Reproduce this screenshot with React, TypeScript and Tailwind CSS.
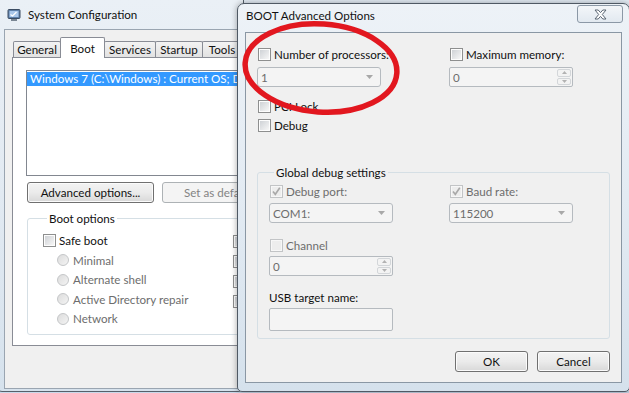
import type { ReactNode } from "react";

function Check({ checked = false, dim = false }: { checked?: boolean; dim?: boolean }) {
  return (
    <span
      className={
        dim
          ? "relative flex h-[13px] w-[13px] shrink-0 items-center justify-center border border-[#c2c4c6] bg-[#f7f7f7]"
          : "relative flex h-[13px] w-[13px] shrink-0 items-center justify-center border border-[#8e8f8f] bg-[#fdfdfd]"
      }
    >
      <span
        className={
          dim
            ? "h-[9px] w-[9px] bg-[#ededed]"
            : "h-[9px] w-[9px] bg-linear-to-br from-[#cfd2d6] to-[#f7f7f7]"
        }
      />
      {checked && (
        <svg className="absolute inset-0" width="11" height="11" viewBox="0 0 11 11">
          <path d="M2 5.5 L4.3 8.3 L8.8 1.8" fill="none" stroke="#a9a9a9" strokeWidth="1.6" />
        </svg>
      )}
    </span>
  );
}

function CheckRow({
  label,
  checked,
  dim,
  gray,
}: {
  label: string;
  checked?: boolean;
  dim?: boolean;
  gray?: boolean;
}) {
  return (
    <div className="ml-px flex h-[13px] items-center gap-[3px] whitespace-nowrap leading-[13px]">
      <Check checked={checked} dim={dim} />
      <span className={gray ? "text-[#6d6d6d]" : "text-[#111]"}>{label}</span>
    </div>
  );
}

function Radio({ label }: { label: string }) {
  return (
    <div className="flex h-[19.5px] items-center gap-[4px] whitespace-nowrap pl-[14px] text-[#6d6d6d]">
      <span className="h-[12px] w-[12px] shrink-0 rounded-full border border-[#c4c6c8] bg-linear-to-br from-[#dcdcdc] to-[#f4f4f4]" />
      {label}
    </div>
  );
}

function Combo({ value }: { value: string }) {
  return (
    <div className="flex h-[20px] w-[124px] items-center justify-between rounded-[3px] border border-[#b5babf] bg-[#f4f4f4] pl-[3px] pr-[7px] text-[#6d6d6d]">
      <span>{value}</span>
      <svg width="7" height="4" viewBox="0 0 7 4">
        <path d="M0 0h7L3.5 4z" fill="#a8a8a8" />
      </svg>
    </div>
  );
}

function Spin({ value }: { value: string }) {
  return (
    <div className="flex h-[20px] w-[124px] rounded-[2px] border border-[#b5babf] bg-[#f4f4f4] text-[#6d6d6d]">
      <span className="flex flex-1 items-center pl-[3px]">{value}</span>
      <div className="flex w-[16px] flex-col gap-px p-px">
        <span className="flex flex-1 items-center justify-center rounded-[2px] border border-[#d3d6d9] bg-[#f3f3f3]">
          <svg width="5" height="3" viewBox="0 0 5 3">
            <path d="M0 3h5L2.5 0z" fill="#b2b2b2" />
          </svg>
        </span>
        <span className="flex flex-1 items-center justify-center rounded-[2px] border border-[#d3d6d9] bg-[#f3f3f3]">
          <svg width="5" height="3" viewBox="0 0 5 3">
            <path d="M0 0h5L2.5 3z" fill="#b2b2b2" />
          </svg>
        </span>
      </div>
    </div>
  );
}

function Button({ children, width, disabled }: { children: ReactNode; width: string; disabled?: boolean }) {
  return (
    <div
      className={
        disabled
          ? `flex h-[21px] ${width} shrink-0 items-center justify-center rounded-[3px] border border-[#adb2b5] bg-[#f4f4f4] whitespace-nowrap text-[#838383]`
          : `flex h-[21px] ${width} shrink-0 items-center justify-center rounded-[3px] border border-[#707070] bg-linear-to-b from-[#f3f3f3] via-[#ebebeb] to-[#d8d8d8] whitespace-nowrap text-[#111] shadow-[inset_0_0_0_1px_#fbfbfb]`
      }
    >
      {children}
    </div>
  );
}

function Tab({ label, width, active }: { label: string; width: string; active?: boolean }) {
  return (
    <div
      className={
        active
          ? `relative z-10 -mb-px -ml-px flex h-[21px] ${width} shrink-0 items-start justify-center rounded-t-[2px] border border-b-0 border-[#898c95] bg-white pt-[3px]`
          : `-ml-px flex h-[16px] ${width} shrink-0 items-center justify-center rounded-t-[2px] border border-b-0 border-[#898c95] bg-linear-to-b from-[#f3f3f3] to-[#e2e2e2] first:ml-0`
      }
    >
      {label}
    </div>
  );
}

function BackWindow() {
  // only the part left of the dialog is visible, so the window is clipped there
  return (
    <div className="absolute left-[-4px] top-[-1px] flex h-[393px] w-[248px] flex-col overflow-hidden rounded-b-[6px] border border-[#56606a] bg-linear-to-b from-[#eaf0f6] via-[#e2eaf2] to-[#d6e2ed]">
      <div className="flex h-[29px] shrink-0 items-center gap-[7px] pl-[10px]">
        <svg width="14" height="14" viewBox="0 0 14 14">
          <rect x="1" y="1.5" width="12" height="9" rx="1" fill="#5d7fa8" stroke="#3c4d63" />
          <rect x="2.5" y="3" width="9" height="6" fill="#a9c7ea" />
          <path d="M3.5 6.5 L5.5 8 L9.5 4" fill="none" stroke="#ffffff" strokeWidth="1.2" />
          <rect x="4" y="11" width="6" height="2" fill="#7b8794" />
        </svg>
        <span className="whitespace-nowrap text-[#111]">System Configuration</span>
      </div>
      <div className="mb-[2px] ml-[7px] flex w-[300px] flex-1 flex-col border border-[#9aa5b1] bg-[#f0f0f0] pl-[8px] pt-[7px]">
        <div className="flex items-end">
          <Tab label="General" width="w-[48px]" />
          <Tab label="Boot" width="w-[45px]" active />
          <Tab label="Services" width="w-[52px]" />
          <Tab label="Startup" width="w-[48px]" />
          <Tab label="Tools" width="w-[40px]" />
        </div>
        <div className="-ml-px h-[289px] w-[280px] border border-[#898c95] bg-white pl-[13px] pt-[12px]">
          <div className="h-[106px] w-[250px] overflow-hidden border border-[#828790] bg-white pt-px">
            <div className="h-[14px] whitespace-nowrap bg-[#3399ff] pl-[3px] leading-[14px] text-white">
              Windows 7 (C:\Windows) : Current OS; Default OS
            </div>
          </div>
          <div className="ml-px mt-[6px] flex gap-[8px]">
            <Button width="w-[127px]">Advanced options...</Button>
            <Button width="w-[113px]" disabled>
              Set as default
            </Button>
          </div>
          <fieldset className="ml-px mt-[8px] w-[250px] rounded-[3px] border border-[#d5dfe5] pb-[5px] pl-[15px]">
            <legend className="ml-[4px] px-[2px] leading-[15px]">Boot options</legend>
            <div className="mt-[5px] grid grid-cols-[190px_1fr] items-start">
              <div className="flex flex-col">
                <div className="flex h-[19.5px] items-center gap-[3px] whitespace-nowrap">
                  <Check />
                  Safe boot
                </div>
                <Radio label="Minimal" />
                <Radio label="Alternate shell" />
                <Radio label="Active Directory repair" />
                <Radio label="Network" />
              </div>
              <div className="flex flex-col">
                {[0, 1, 2, 3].map((i) => (
                  <div key={i} className="flex h-[20px] items-center">
                    <Check />
                  </div>
                ))}
              </div>
            </div>
          </fieldset>
        </div>
      </div>
    </div>
  );
}

function BootDialog() {
  return (
    <div className="absolute left-[237px] top-[3px] flex h-[389px] w-[393px] flex-col rounded-t-[7px] rounded-b-[5px] border border-[#4f5964] bg-linear-to-b from-[#edf2f7] via-[#e3ebf3] to-[#d5e1ec] shadow-[0_0_6px_rgba(0,0,0,0.35)]">
      <div className="flex h-[28px] shrink-0 items-start justify-between">
        <span className="pl-[8px] pt-[4px] leading-[15px] text-[#111]">BOOT Advanced Options</span>
        <div className="mr-[6px] mt-px flex h-[18px] w-[46px] items-center justify-center rounded-[3px] border border-[#8b98a6] bg-linear-to-b from-[#f3f6f9] to-[#e2e9f0]">
          <svg width="13" height="11" viewBox="0 0 13 11">
            <path
              d="M1 1h3.2l2.3 2.6L8.8 1H12L8.3 5.5L12 10H8.8L6.5 7.4L4.2 10H1l3.7-4.5z"
              fill="#ffffff"
              stroke="#5b6673"
              strokeWidth="1"
              strokeLinejoin="round"
            />
          </svg>
        </div>
      </div>
      <div className="mx-[7px] flex h-[351px] flex-col border border-[#8a97a4] bg-[#f0f0f0]">
        <div className="grid grid-cols-[192px_124px] pl-[11px] pt-[15px]">
          <div className="flex flex-col gap-[6px]">
            <CheckRow label="Number of processors:" />
            <Combo value="1" />
          </div>
          <div className="flex flex-col gap-[6px]">
            <CheckRow label="Maximum memory:" />
            <Spin value="0" />
          </div>
        </div>
        <div className="mt-[13px] flex flex-col gap-[6px] pl-[11px]">
          <CheckRow label="PCI Lock" />
          <CheckRow label="Debug" />
        </div>
        <fieldset className="mx-[11px] mt-[33px] rounded-[3px] border border-[#d5dfe5] pb-[7px] pl-[11px]">
          <legend className="ml-[5px] px-[2px] leading-[15px]">Global debug settings</legend>
          <div className="mt-[5px] grid grid-cols-[180px_124px] items-start">
            <div className="flex flex-col">
              <CheckRow label="Debug port:" checked dim gray />
              <div className="mt-[5px]">
                <Combo value="COM1:" />
              </div>
              <div className="mt-[16px]">
                <CheckRow label="Channel" dim gray />
              </div>
              <div className="mt-[4px]">
                <Spin value="0" />
              </div>
              <div className="mt-[14px] leading-[15px]">USB target name:</div>
              <div className="mt-[3px] h-[23px] w-[124px] rounded-[2px] border border-[#b5babf] bg-[#f4f4f4]" />
            </div>
            <div className="flex flex-col">
              <CheckRow label="Baud rate:" checked dim gray />
              <div className="mt-[5px]">
                <Combo value="115200" />
              </div>
            </div>
          </div>
        </fieldset>
        <div className="mt-[12px] flex justify-end gap-[9px] pr-[11px]">
          <Button width="w-[73px]">OK</Button>
          <Button width="w-[73px]">Cancel</Button>
        </div>
      </div>
    </div>
  );
}

export default function App() {
  return (
    <div className="relative h-[393px] w-[629px] overflow-hidden bg-linear-to-b from-[#e4edf6] to-[#c9d9ea] font-['Lato',sans-serif] text-[11.6px] leading-[15px] text-[#111]">
      <BackWindow />
      <BootDialog />
      <svg className="pointer-events-none absolute left-0 top-0" width="629" height="393" viewBox="0 0 629 393">
        <ellipse
          cx="321"
          cy="68"
          rx="76"
          ry="44"
          transform="rotate(4 321 68)"
          fill="none"
          stroke="#e2171f"
          strokeWidth="5.5"
        />
      </svg>
    </div>
  );
}
